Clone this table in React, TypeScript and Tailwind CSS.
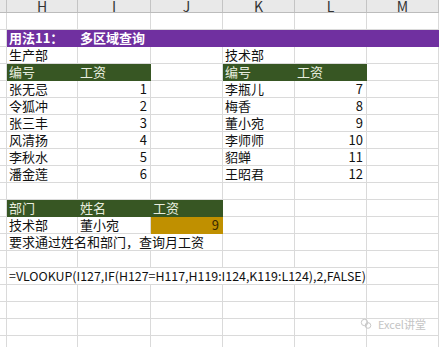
import React from 'react';

type Fill = 'none' | 'purple' | 'green' | 'gold';

interface Cell {
  text?: string;
  right?: boolean;
  fill?: Fill;
  bold?: boolean;
  /** narrower latin text (formula row) */
  small?: boolean;
  /** text from the left neighbour spills over this cell's right edge */
  spill?: boolean;
}

// column widths: G (partial), H, I, J, K, L, M
const COLS = ['w-[7px]', 'w-[71px]', 'w-[73px]', 'w-[72px]', 'w-[72px]', 'w-[72px]', 'w-[72px]'];
const LETTERS = ['', 'H', 'I', 'J', 'K', 'L', 'M'];

const FILL_CLASS: Record<Fill, string> = {
  none: 'bg-white border-b-[#dadada] border-r-[#dadada] text-[#111]',
  purple: 'bg-[#7030a0] border-b-[#7030a0] border-r-[#7030a0] text-white',
  green: 'bg-[#375623] border-b-[#375623] border-r-[#375623] text-[#e8eddf]',
  gold: 'bg-[#c09000] border-b-[#c09000] border-r-[#c09000] text-[#3a2a00]',
};

const P: Cell = { fill: 'purple' };
const E: Cell = {};
const S: Cell = { spill: true };

const pair = (a: string, b: number, c: string, d: number): Cell[] => [
  E,
  { text: a },
  { text: String(b), right: true },
  E,
  { text: c },
  { text: String(d), right: true },
  E,
];

const ROWS: Cell[][] = [
  [E, E, E, E, E, E, E],
  [E, { text: '用法11：', fill: 'purple', bold: true }, { text: '多区域查询', fill: 'purple', bold: true }, P, P, P, P],
  [E, { text: '生产部' }, E, E, { text: '技术部' }, E, E],
  [E, { text: '编号', fill: 'green' }, { text: '工资', fill: 'green' }, E, { text: '编号', fill: 'green' }, { text: '工资', fill: 'green' }, E],
  pair('张无忌', 1, '李瓶儿', 7),
  pair('令狐冲', 2, '梅香', 8),
  pair('张三丰', 3, '董小宛', 9),
  pair('风清扬', 4, '李师师', 10),
  pair('李秋水', 5, '貂蝉', 11),
  pair('潘金莲', 6, '王昭君', 12),
  [E, E, E, E, E, E, E],
  [E, { text: '部门', fill: 'green' }, { text: '姓名', fill: 'green' }, { text: '工资', fill: 'green' }, E, E, E],
  [E, { text: '技术部' }, { text: '董小宛' }, { text: '9', right: true, fill: 'gold' }, E, E, E],
  [E, { text: '要求通过姓名和部门，查询月工资', spill: true }, S, E, E, E, E],
  [E, E, E, E, E, E, E],
  [
    E,
    { text: '=VLOOKUP(I127,IF(H127=H117,H119:I124,K119:L124),2,FALSE)', spill: true, small: true },
    S,
    S,
    S,
    E,
    E,
  ],
  [E, E, E, E, E, E, E],
  [E, E, E, E, E, E, E],
  [E, E, E, E, E, E, E],
  [E, E, E, E, E, E, E],
];

function SheetCell({ cell, width }: { cell: Cell; width: string }) {
  const fill = FILL_CLASS[cell.fill ?? 'none'];
  return (
    <div
      className={`${width} ${fill} h-[17px] shrink-0 border-b relative ${
        cell.spill ? 'border-r-0 pr-px' : 'border-r'
      }`}
    >
      {cell.text && (
        <span
          className={`absolute z-10 bottom-0 whitespace-nowrap leading-[16px] ${
            cell.small ? 'text-[12.4px]' : 'text-[13px]'
          } ${cell.right ? 'right-[3px]' : 'left-[2px]'} ${cell.bold ? 'font-bold' : ''}`}
        >
          {cell.text}
        </span>
      )}
    </div>
  );
}

export default function App() {
  return (
    <div
      className="w-[439px] h-[347px] overflow-hidden bg-white relative"
      style={{ fontFamily: '"Noto Sans CJK SC", "Microsoft YaHei", sans-serif' }}
    >
      {/* column header strip, cut at the top */}
      <div className="flex h-[13px] bg-[#e9e9e9] border-b border-[#bcbcbc]">
        {COLS.map((w, i) => (
          <div
            key={i}
            className={`${w} shrink-0 border-r border-[#c4c4c4] flex items-end justify-center overflow-hidden`}
          >
            <span className="text-[14px] leading-[14px] text-[#333] -mb-[1px]">{LETTERS[i]}</span>
          </div>
        ))}
      </div>

      {ROWS.map((row, r) => (
        <div key={r} className="flex">
          {row.map((cell, c) => (
            <SheetCell key={c} cell={cell} width={COLS[c]} />
          ))}
        </div>
      ))}

      {/* faint watermark */}
      <div className="absolute left-[360px] top-[318px] flex items-center gap-[6px] text-[#c4c4c4]">
        <svg width="12" height="12" viewBox="0 0 12 12" fill="none" stroke="#c8c8c8" strokeWidth="1">
          <circle cx="4.5" cy="4.5" r="3.2" />
          <circle cx="8" cy="7.5" r="2.8" />
        </svg>
        <span className="text-[11px] leading-none">Excel讲堂</span>
      </div>
    </div>
  );
}
